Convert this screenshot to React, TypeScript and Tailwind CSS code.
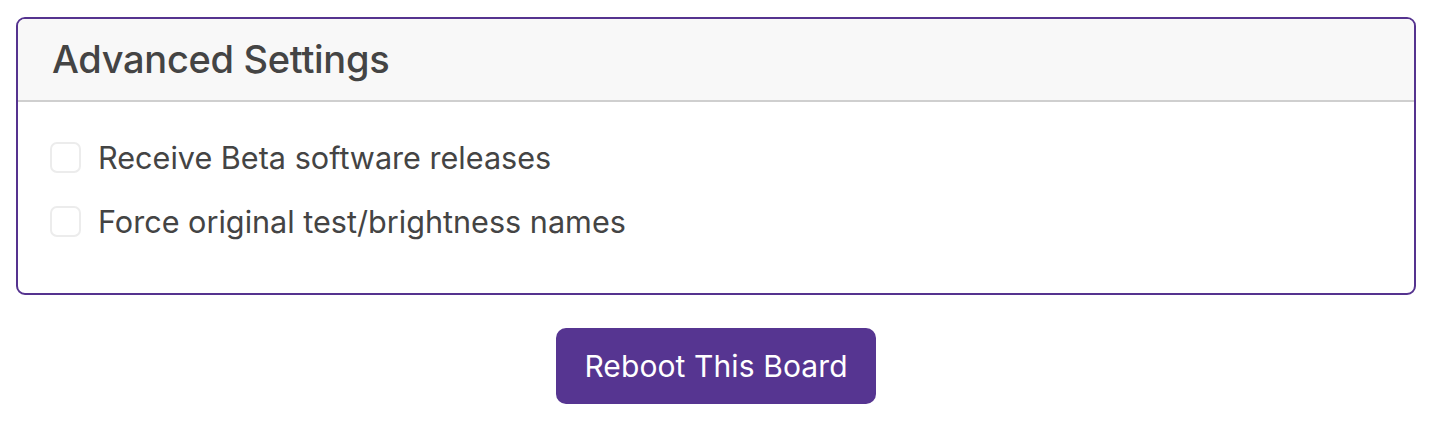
export default function App() {
  const font = { fontFamily: 'Inter, "Noto Sans", sans-serif' }
  return (
    <main className="w-[1432px] px-4 pt-[17px] bg-white" style={font}>
      <section className="border-2 border-[#55338f] rounded-[9px] overflow-hidden">
        <div className="h-[83px] bg-[#f8f8f8] border-b-2 border-[#cfcfcf] flex items-center px-[34px]">
          <h2 className="text-[38px] font-medium text-[#444] tracking-[-0.3px]">Advanced Settings</h2>
        </div>
        <div className="pt-[40px] pb-[56px] px-[32px] flex flex-col gap-[33px]">
          <label className="flex items-center gap-[17px] h-[31px]">
            <span className="w-[31px] h-[31px] rounded-[7px] border-2 border-[#ececec] bg-white shrink-0" />
            <span className="text-[30.6px] text-[#444]">Receive Beta software releases</span>
          </label>
          <label className="flex items-center gap-[17px] h-[31px]">
            <span className="w-[31px] h-[31px] rounded-[7px] border-2 border-[#ececec] bg-white shrink-0" />
            <span className="text-[30.6px] text-[#444]">Force original test/brightness names</span>
          </label>
        </div>
      </section>
      <div className="flex justify-center pt-[33px]">
        <button className="w-[320px] h-[76px] rounded-[10px] bg-[#563591] text-white text-[30px] tracking-[0.1px]">
          Reboot This Board
        </button>
      </div>
    </main>
  )
}
